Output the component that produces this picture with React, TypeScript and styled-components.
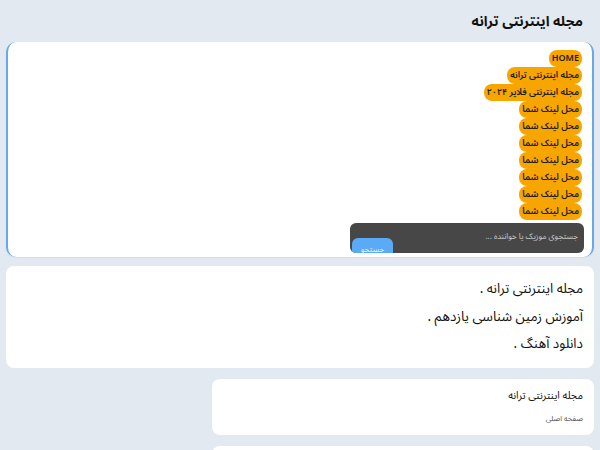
import React from "react";
import styled, { createGlobalStyle } from "styled-components";

const Global = createGlobalStyle`
  html, body { margin: 0; padding: 0; }
  body {
    background: #e3e9f0;
    font-family: "Noto Sans Arabic", "Vazirmatn", "DejaVu Sans", "Noto Sans", sans-serif;
    direction: rtl;
    overflow: hidden;
    height: 450px;
  }
`;

const Page = styled.div`
  display: flex;
  flex-direction: column;
  padding: 0 6px;
  & > * { flex-shrink: 0; }
`;

const SiteTitle = styled.h1`
  margin: 0;
  height: 42px;
  display: flex;
  align-items: center;
  padding-right: 11px;
  font-size: 14px;
  font-weight: 700;
  color: #111;
`;

const HeaderBox = styled.div`
  background: #fff;
  border-radius: 10px;
  border-left: 2px solid #6aa8ec;
  border-right: 2px solid #6aa8ec;
  box-shadow: 0 1px 2px rgba(0, 0, 0, 0.06);
  padding: 8px 10px 4px;
  display: flex;
  flex-direction: column;
  align-items: flex-start;
`;

const Menu = styled.ul`
  list-style: none;
  margin: 0;
  padding: 0;
  display: flex;
  flex-direction: column;
  align-items: flex-start;
`;

const Pill = styled.li`
  background: #f7a500;
  color: #1a1a1a;
  font-size: 9px;
  font-weight: 600;
  height: 17px;
  line-height: 17px;
  padding: 0 3px;
  border-radius: 8px;
  white-space: nowrap;
  flex-shrink: 0;
`;

const SearchForm = styled.form`
  margin: 3px -2px 0 0;
  width: 234px;
  height: 30px;
  flex-shrink: 0;
  background: #474747;
  border-radius: 6px;
  overflow: hidden;
  display: flex;
  align-items: flex-start;
  padding: 0 6px 0 2px;
  box-sizing: border-box;
`;

const SearchInput = styled.div`
  flex: 1;
  padding-top: 9px;
  line-height: 10px;
  font-size: 8px;
  color: #c9c9c9;
`;

const SearchButton = styled.button`
  width: 41px;
  height: 22px;
  margin-top: 15px;
  border: 0;
  border-radius: 6px;
  background: #5aaaf5;
  color: #eaf4ff;
  font-family: inherit;
  font-size: 8px;
  padding: 3px 0 0;
  display: flex;
  justify-content: center;
  align-items: flex-start;
`;

const Card = styled.div<{ $narrow?: boolean }>`
  background: #fff;
  border-radius: 8px;
  margin-top: ${(p) => (p.$narrow ? "11px" : "9px")};
  ${(p) => (p.$narrow ? "width: 382px; align-self: flex-start;" : "")}
  box-sizing: border-box;
`;

const LinkList = styled.div`
  padding: 9px 11px 10px;
  display: flex;
  flex-direction: column;
`;

const LinkLine = styled.div`
  font-size: 13.5px;
  color: #111;
  height: 27.5px;
  line-height: 27.5px;
`;

const PostBody = styled.div`
  padding: 8px 11px 8px;
  height: 56px;
  box-sizing: border-box;
  display: flex;
  flex-direction: column;
`;

const PostTitle = styled.div`
  font-size: 10.5px;
  color: #111;
  height: 18px;
  line-height: 18px;
`;

const Crumb = styled.div`
  font-size: 7.5px;
  color: #555;
  margin-top: 6px;
`;

const items = [
  "HOME",
  "مجله اینترنتی ترانه",
  "مجله اینترنتی فلایر ۲۰۲۴",
  "محل لینک شما",
  "محل لینک شما",
  "محل لینک شما",
  "محل لینک شما",
  "محل لینک شما",
  "محل لینک شما",
  "محل لینک شما",
];

export default function App() {
  return (
    <>
      <Global />
      <Page>
        <SiteTitle>مجله اینترنتی ترانه</SiteTitle>
        <HeaderBox>
          <Menu>
            {items.map((t, i) => (
              <Pill key={i}>{t}</Pill>
            ))}
          </Menu>
          <SearchForm onSubmit={(e) => e.preventDefault()}>
            <SearchInput>جستجوی موزیک یا خواننده ...</SearchInput>
            <SearchButton type="submit">جستجو</SearchButton>
          </SearchForm>
        </HeaderBox>
        <Card>
          <LinkList>
            <LinkLine>مجله اینترنتی ترانه .</LinkLine>
            <LinkLine>آموزش زمین شناسی یازدهم .</LinkLine>
            <LinkLine>دانلود آهنگ .</LinkLine>
          </LinkList>
        </Card>
        <Card $narrow>
          <PostBody>
            <PostTitle>مجله اینترنتی ترانه</PostTitle>
            <Crumb>صفحه اصلی</Crumb>
          </PostBody>
        </Card>
        <Card $narrow>
          <PostBody />
        </Card>
      </Page>
    </>
  );
}
